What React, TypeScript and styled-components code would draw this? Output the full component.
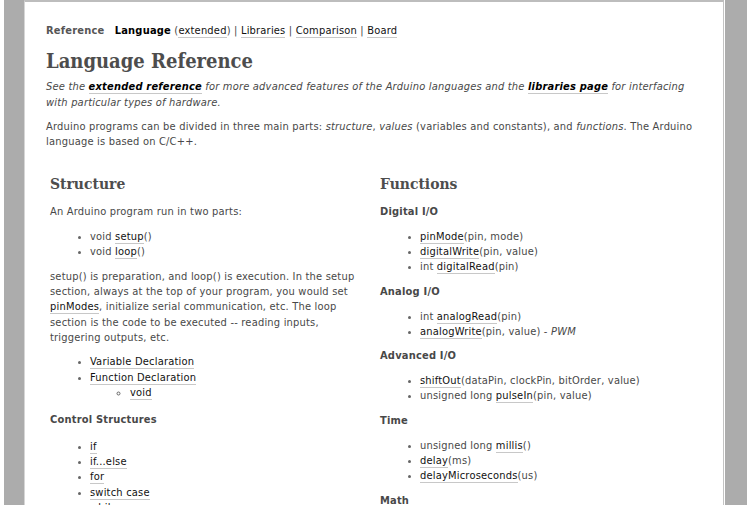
import React from "react";
import styled, { createGlobalStyle } from "styled-components";

const GlobalStyle = createGlobalStyle`
  html, body {
    margin: 0;
    padding: 0;
    background: #fff;
  }
  body {
    font-family: "DejaVu Sans Condensed", "DejaVu Sans", Verdana, sans-serif;
    font-size: 11px;
    letter-spacing: 0.2px;
    color: #484848;
  }
`;

const Shell = styled.div`
  display: flex;
  height: 505px;
  overflow: hidden;
  padding-left: 4px;
  background: #fff;
`;

const Gutter = styled.div<{ $side: "left" | "right" }>`
  flex: 0 0 ${(p) => (p.$side === "left" ? "20px" : "22px")};
  background: #acacac;
  margin-left: ${(p) => (p.$side === "right" ? "1px" : "0")};
`;

const Page = styled.div`
  flex: 1;
  min-width: 0;
  background: #fff;
  border-left: 1px solid #d6d6d6;
  border-right: 1px solid #c4c4c4;
  border-top: 2px solid #bdbdbd;
  padding: 21px 21px 0;
  line-height: 15.3px;
`;

const Crumbs = styled.div`
  color: #484848;
`;

const CrumbLabel = styled.b<{ $dark?: boolean }>`
  color: ${(p) => (p.$dark ? "#000" : "#555")};
  margin-right: ${(p) => (p.$dark ? "0" : "7px")};
`;

const Link = styled.a<{ $strong?: boolean }>`
  color: ${(p) => (p.$strong ? "#000" : "#111")};
  font-weight: ${(p) => (p.$strong ? "bold" : "normal")};
  text-decoration: none;
  border-bottom: 1px solid #c8c8c8;
  cursor: pointer;
`;

const Title = styled.h1`
  font-family: "DejaVu Serif Condensed", "DejaVu Serif", Georgia, serif;
  font-size: 20px;
  line-height: 26px;
  letter-spacing: 0;
  font-weight: bold;
  color: #4d4d4d;
  margin: 10px 0 5px;
`;

const Text = styled.p<{ $italic?: boolean }>`
  margin: 0 0 9.3px;
  font-style: ${(p) => (p.$italic ? "italic" : "normal")};
`;

const Columns = styled.div`
  display: grid;
  grid-template-columns: 310px 1fr;
  column-gap: 20px;
  padding-left: 4px;
  margin-top: 24.4px;
`;

const Column = styled.div``;

const SectionTitle = styled.h2`
  font-family: "DejaVu Serif Condensed", "DejaVu Serif", Georgia, serif;
  font-size: 15.5px;
  line-height: 20px;
  letter-spacing: 0;
  font-weight: bold;
  color: #4d4d4d;
  margin: 0 0 10px;
`;

const SubHead = styled.h4<{ $loose?: boolean }>`
  font-size: 11px;
  font-weight: bold;
  color: #484848;
  margin: ${(p) => (p.$loose ? "11.5px 0" : "9.3px 0")};
`;

const List = styled.ul<{ $nested?: boolean; $loose?: boolean }>`
  margin: ${(p) => (p.$nested ? "0" : p.$loose ? "11.5px 0 9.3px" : "9.3px 0")};
  padding-left: 40px;
  list-style: ${(p) => (p.$nested ? "circle" : "disc")};
  li::marker {
    color: #666;
    font-size: ${(p) => (p.$nested ? "11px" : "9px")};
  }
`;

const Note = styled.i``;

export default function App() {
  return (
    <>
      <GlobalStyle />
      <Shell>
        <Gutter $side="left" />
        <Page>
          <Crumbs>
            <CrumbLabel>Reference</CrumbLabel> <CrumbLabel $dark>Language</CrumbLabel> (
            <Link>extended</Link>) | <Link>Libraries</Link> | <Link>Comparison</Link> |{" "}
            <Link>Board</Link>
          </Crumbs>
          <Title>Language Reference</Title>
          <Text $italic>
            See the <Link $strong>extended reference</Link> for more advanced features of the Arduino
            languages and the <Link $strong>libraries page</Link> for interfacing with particular
            types of hardware.
          </Text>
          <Text>
            Arduino programs can be divided in three main parts: <i>structure</i>, <i>values</i>{" "}
            (variables and constants), and <i>functions</i>. The Arduino language is based on C/C++.
          </Text>

          <Columns>
            <Column>
              <SectionTitle>Structure</SectionTitle>
              <Text>An Arduino program run in two parts:</Text>
              <List>
                <li>
                  void <Link>setup</Link>()
                </li>
                <li>
                  void <Link>loop</Link>()
                </li>
              </List>
              <Text>
                setup() is preparation, and loop() is execution. In the setup section, always at the
                top of your program, you would set <Link>pinModes</Link>, initialize serial
                communication, etc. The loop section is the code to be executed -- reading inputs,
                triggering outputs, etc.
              </Text>
              <List>
                <li>
                  <Link>Variable Declaration</Link>
                </li>
                <li>
                  <Link>Function Declaration</Link>
                  <List $nested>
                    <li>
                      <Link>void</Link>
                    </li>
                  </List>
                </li>
              </List>
              <SubHead $loose>Control Structures</SubHead>
              <List $loose>
                <li>
                  <Link>if</Link>
                </li>
                <li>
                  <Link>if...else</Link>
                </li>
                <li>
                  <Link>for</Link>
                </li>
                <li>
                  <Link>switch case</Link>
                </li>
                <li>
                  <Link>while</Link>
                </li>
              </List>
            </Column>

            <Column>
              <SectionTitle>Functions</SectionTitle>
              <SubHead>Digital I/O</SubHead>
              <List>
                <li>
                  <Link>pinMode</Link>(pin, mode)
                </li>
                <li>
                  <Link>digitalWrite</Link>(pin, value)
                </li>
                <li>
                  int <Link>digitalRead</Link>(pin)
                </li>
              </List>
              <SubHead>Analog I/O</SubHead>
              <List>
                <li>
                  int <Link>analogRead</Link>(pin)
                </li>
                <li>
                  <Link>analogWrite</Link>(pin, value) - <Note>PWM</Note>
                </li>
              </List>
              <SubHead>Advanced I/O</SubHead>
              <List>
                <li>
                  <Link>shiftOut</Link>(dataPin, clockPin, bitOrder, value)
                </li>
                <li>
                  unsigned long <Link>pulseIn</Link>(pin, value)
                </li>
              </List>
              <SubHead>Time</SubHead>
              <List>
                <li>
                  unsigned long <Link>millis</Link>()
                </li>
                <li>
                  <Link>delay</Link>(ms)
                </li>
                <li>
                  <Link>delayMicroseconds</Link>(us)
                </li>
              </List>
              <SubHead>Math</SubHead>
            </Column>
          </Columns>
        </Page>
        <Gutter $side="right" />
      </Shell>
    </>
  );
}
